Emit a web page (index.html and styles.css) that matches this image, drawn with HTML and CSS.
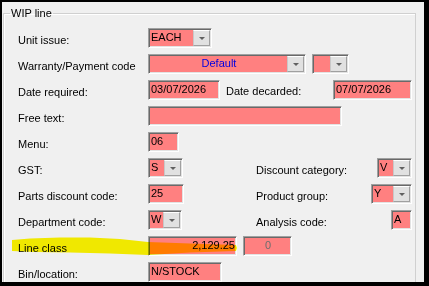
FILE: index.html
```html
<!DOCTYPE html>
<html lang="en">

<head>
  <meta charset="UTF-8" />
  <title>WIP line</title>
  <link rel="stylesheet" href="styles.css">
</head>

<body>
  <div id="window">
    <fieldset id="wip">
      <legend>WIP line</legend>

      <div class="row">
        <label class="lbl">Unit issue:</label>
        <div class="box combo f-unit"><span class="val">EACH</span><span class="drop"></span></div>
      </div>

      <div class="row">
        <label class="lbl">Warranty/Payment code</label>
        <div class="box combo f-warranty"><span class="val center blue">Default</span><span class="drop"></span></div>
        <div class="box combo f-warranty2"><span class="val"></span><span class="drop"></span></div>
      </div>

      <div class="row">
        <label class="lbl">Date required:</label>
        <div class="box f-date1"><span class="val">03/07/2026</span></div>
        <label class="lbl-inline">Date decarded:</label>
        <div class="box f-date2"><span class="val">07/07/2026</span></div>
      </div>

      <div class="row">
        <label class="lbl">Free text:</label>
        <div class="box f-free"><span class="val"></span></div>
      </div>

      <div class="row">
        <label class="lbl">Menu:</label>
        <div class="box f-menu"><span class="val">06</span></div>
      </div>

      <div class="row">
        <label class="lbl">GST:</label>
        <div class="col2">
          <div class="box combo f-gst"><span class="val">S</span><span class="drop"></span></div>
        </div>
        <label class="lbl-side">Discount category:</label>
        <div class="box combo f-disc"><span class="val">V</span><span class="drop"></span></div>
      </div>

      <div class="row">
        <label class="lbl">Parts discount code:</label>
        <div class="col2">
          <div class="box f-parts"><span class="val">25</span></div>
        </div>
        <label class="lbl-side">Product group:</label>
        <div class="box combo f-prod"><span class="val">Y</span><span class="drop"></span></div>
      </div>

      <div class="row">
        <label class="lbl">Department code:</label>
        <div class="col2">
          <div class="box combo f-dept"><span class="val">W</span><span class="drop"></span></div>
        </div>
        <label class="lbl-side">Analysis code:</label>
        <div class="box f-anal"><span class="val">A</span></div>
      </div>

      <div class="row">
        <label class="lbl">Line class</label>
        <div class="box f-amount"><span class="val right">2,129.25</span></div>
        <div class="box f-zero"><span class="val center grey">0</span></div>
      </div>

      <div class="row">
        <label class="lbl">Bin/location:</label>
        <div class="box f-bin"><span class="val">N/STOCK</span></div>
      </div>
    </fieldset>

    <!-- highlighter stroke drawn over the line class row -->
    <svg class="marker" viewBox="2 2 422 280" width="422" height="280">
      <polygon points="12,240 30,238.5 60,237.5 90,237.5 120,239 148,242 190,243.5 236,245 237,248 236,251 190,252.5 148,255 110,253.5 70,252.5 35,252 12,251" />
    </svg>
  </div>
</body>

</html>
```

FILE: styles.css
```css
html {
  background-color: #000;
}

body {
  margin: 0;
  padding: 2px 5px 4px 2px;
  font-family: 'Liberation Sans', Arial, sans-serif;
  font-size: 11px;
  color: #000;
}

#window {
  position: relative;
  width: 422px;
  height: 280px;
  background-color: #f0f0f0;
  overflow: hidden;
}

#wip {
  margin: 5px 0 0 1px;
  padding: 5px 0 0 14px;
  width: 413px;
  height: 300px;
  box-sizing: border-box;
  border: 1px solid #d0d0d0;
  box-shadow: inset 1px 1px #fff;
}

#wip legend {
  margin-left: -8px;
  padding: 0 1px;
  line-height: 13px;
}

.row {
  display: flex;
  align-items: center;
  width: 394px;
  height: 26px;
}

.lbl {
  width: 130px;
  flex-shrink: 0;
  padding-top: 4px;
}

.lbl-inline {
  margin-left: 6px;
  flex: 1;
  padding-top: 2px;
}

.lbl-side {
  flex: 1;
  padding-top: 4px;
}

.col2 {
  width: 108px;
  flex-shrink: 0;
}

.box {
  display: flex;
  align-items: center;
  height: 20px;
  box-sizing: border-box;
  background-color: #ff8080;
  border: 1px solid;
  border-color: #a0a0a0 #fff #fff #a0a0a0;
  box-shadow: inset 1px 1px #696969, inset -1px -1px #e3e3e3;
  padding: 0 1px 2px 2px;
  flex-shrink: 0;
}

.val {
  flex: 1;
  white-space: nowrap;
  overflow: hidden;
}

.val.center {
  text-align: center;
}

.val.right {
  text-align: right;
}

.blue {
  color: #0000e0;
}

.grey {
  color: #6d6d6d;
}

.combo {
  padding-right: 1px;
}

.drop {
  position: relative;
  align-self: stretch;
  width: 15px;
  margin: 1px 0 -1px;
  background-color: #e1e1e1;
  border: 1px solid #adadad;
  border-color: #fff #a0a0a0 #a0a0a0 #c8c8c8;
}

.drop::after {
  content: "";
  position: absolute;
  left: 5px;
  top: 6px;
  border-left: 3px solid transparent;
  border-right: 3px solid transparent;
  border-top: 3px solid #606060;
}

.f-unit { width: 64px; }
.f-warranty { width: 158px; }
.f-warranty2 { width: 37px; margin-left: 6px; }
.f-date1 { width: 72px; }
.f-date2 { width: 79px; }
.f-free { width: 194px; }
.f-menu { width: 31px; }
.f-gst { width: 35px; }
.f-disc { width: 35px; }
.f-parts { width: 36px; }
.f-prod { width: 41px; }
.f-dept { width: 34px; }
.f-anal { width: 21px; }
.f-amount { width: 89px; }
.f-zero { width: 49px; margin-left: 6px; }
.f-bin { width: 74px; }

.marker {
  position: absolute;
  left: 0;
  top: 0;
  pointer-events: none;
  mix-blend-mode: multiply;
}

.marker polygon {
  fill: #fff700;
}
```
